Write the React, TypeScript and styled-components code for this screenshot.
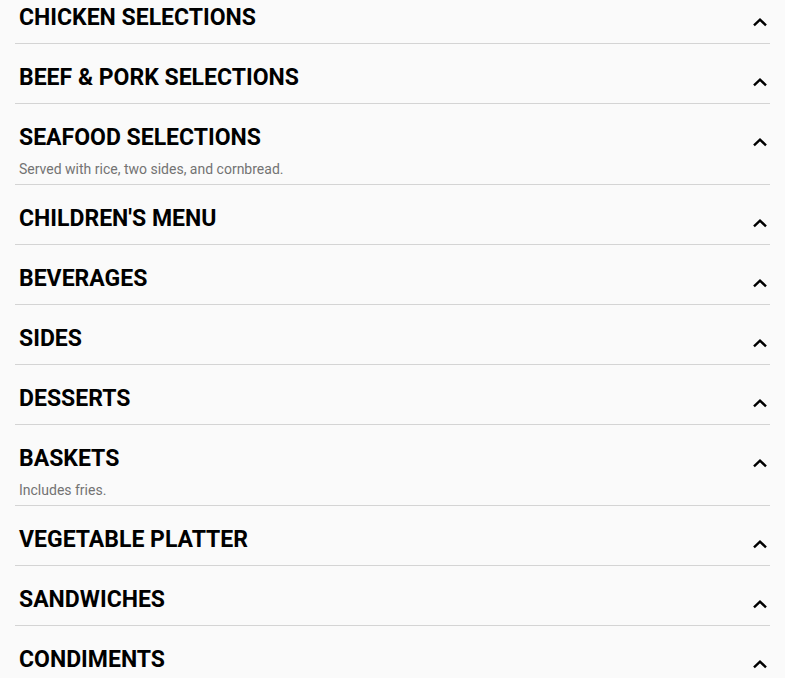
import React from "react";
import styled, { createGlobalStyle } from "styled-components";

const Global = createGlobalStyle`
  html, body { margin: 0; padding: 0; background: #fafafa; }
  body { font-family: Roboto, "Noto Sans", Arial, sans-serif; overflow: hidden; }
`;

const Page = styled.div`
  padding: 0 15px;
  margin-top: -16px;
`;

const Row = styled.section<{ $hasSub: boolean }>`
  border-bottom: 1px solid #d4d4d4;
  padding-bottom: ${(p) => (p.$hasSub ? 5 : 12)}px;
`;

const Header = styled.div`
  display: flex;
  justify-content: space-between;
  align-items: flex-start;
  padding: 20px 2px 0 4px;
`;

const Title = styled.h2`
  margin: 0;
  font-size: 23px;
  line-height: 27px;
  font-weight: 700;
  color: #000;
  letter-spacing: 0;
`;

const Sub = styled.p`
  margin: 8px 0 0 4px;
  font-size: 14px;
  line-height: 20px;
  color: #737373;
`;

const Chevron = styled.svg`
  width: 16px;
  height: 10px;
  margin-top: 13px;
  flex: none;
`;

const sections: { title: string; sub?: string }[] = [
  { title: "CHICKEN SELECTIONS" },
  { title: "BEEF & PORK SELECTIONS" },
  { title: "SEAFOOD SELECTIONS", sub: "Served with rice, two sides, and cornbread." },
  { title: "CHILDREN'S MENU" },
  { title: "BEVERAGES" },
  { title: "SIDES" },
  { title: "DESSERTS" },
  { title: "BASKETS", sub: "Includes fries." },
  { title: "VEGETABLE PLATTER" },
  { title: "SANDWICHES" },
  { title: "CONDIMENTS" },
];

export default function App() {
  return (
    <>
      <Global />
      <Page>
        {sections.map((s) => (
          <Row key={s.title} $hasSub={!!s.sub}>
            <Header>
              <Title>{s.title}</Title>
              <Chevron viewBox="0 0 16 10">
                <polyline
                  points="2,8.4 8,2.6 14,8.4"
                  fill="none"
                  stroke="#000"
                  strokeWidth="2.4"
                />
              </Chevron>
            </Header>
            {s.sub && <Sub>{s.sub}</Sub>}
          </Row>
        ))}
      </Page>
    </>
  );
}
